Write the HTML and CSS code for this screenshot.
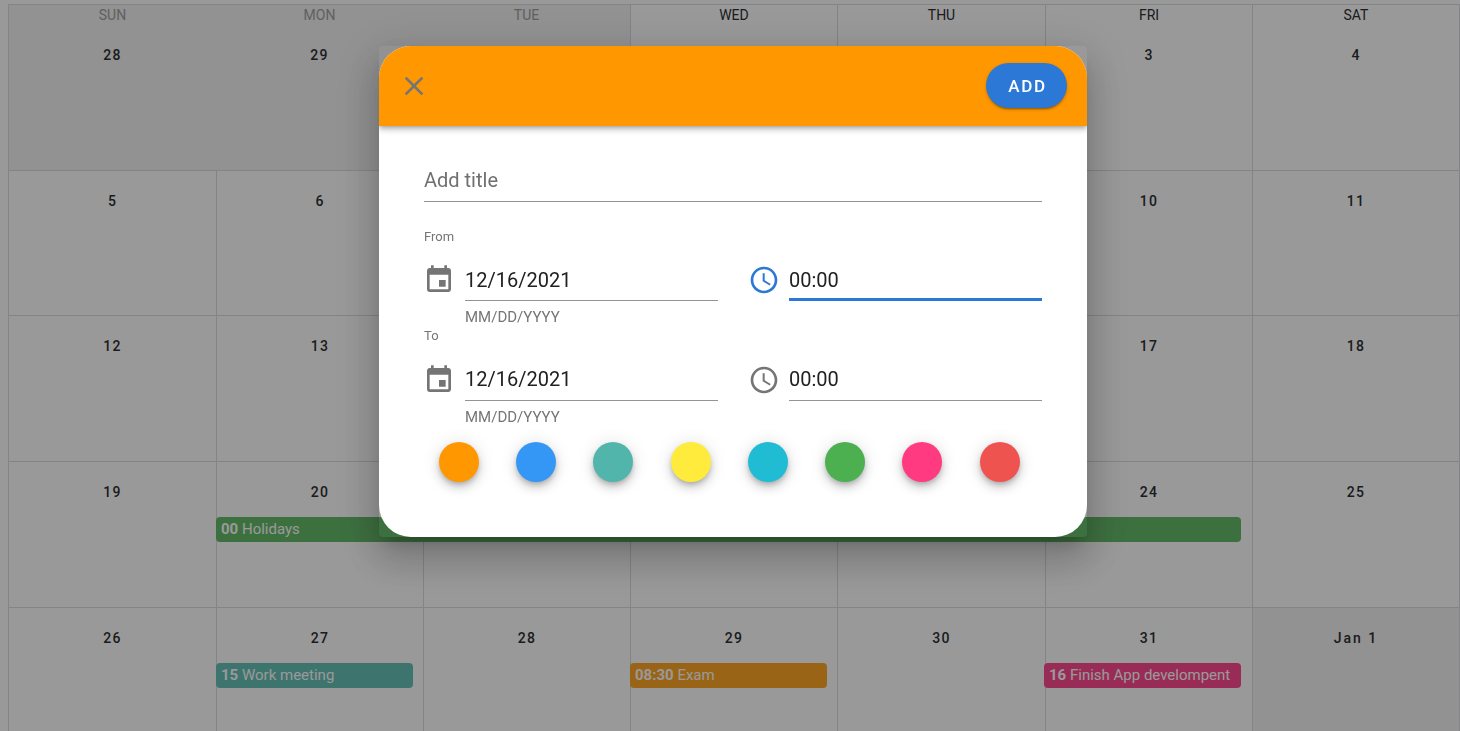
FILE: index.html
```html
<!DOCTYPE html>
<html lang="en">
<head>
    <meta charset="UTF-8">
    <meta name="viewport" content="width=device-width, initial-scale=1.0">
    <title>Calendar</title>
    <link rel="stylesheet" href="styles.css">
</head>
<body>
    <div class="calendar">
        <div class="week first-week">
            <div class="day other-month"><div class="day-name past">SUN</div><div class="date">28</div></div>
            <div class="day other-month no-line"><div class="day-name past">MON</div><div class="date">29</div></div>
            <div class="day other-month no-line"><div class="day-name past">TUE</div><div class="date">30</div></div>
            <div class="day"><div class="day-name">WED</div><div class="date">1</div></div>
            <div class="day"><div class="day-name">THU</div><div class="date">2</div></div>
            <div class="day"><div class="day-name">FRI</div><div class="date">3</div></div>
            <div class="day"><div class="day-name">SAT</div><div class="date">4</div></div>
        </div>
        <div class="week">
            <div class="day"><div class="date">5</div></div>
            <div class="day"><div class="date">6</div></div>
            <div class="day"><div class="date">7</div></div>
            <div class="day"><div class="date">8</div></div>
            <div class="day"><div class="date">9</div></div>
            <div class="day"><div class="date">10</div></div>
            <div class="day"><div class="date">11</div></div>
        </div>
        <div class="week">
            <div class="day"><div class="date">12</div></div>
            <div class="day"><div class="date">13</div></div>
            <div class="day"><div class="date">14</div></div>
            <div class="day"><div class="date">15</div></div>
            <div class="day"><div class="date">16</div></div>
            <div class="day"><div class="date">17</div></div>
            <div class="day"><div class="date">18</div></div>
        </div>
        <div class="week">
            <div class="day"><div class="date">19</div></div>
            <div class="day"><div class="date">20</div></div>
            <div class="day"><div class="date">21</div></div>
            <div class="day"><div class="date">22</div></div>
            <div class="day"><div class="date">23</div></div>
            <div class="day"><div class="date">24</div></div>
            <div class="day"><div class="date">25</div></div>
            <div class="week-events">
                <div class="event green holidays"><b>00</b> Holidays</div>
            </div>
        </div>
        <div class="week">
            <div class="day"><div class="date">26</div></div>
            <div class="day"><div class="date">27</div></div>
            <div class="day"><div class="date">28</div></div>
            <div class="day"><div class="date">29</div></div>
            <div class="day"><div class="date">30</div></div>
            <div class="day"><div class="date">31</div></div>
            <div class="day other-month"><div class="date month-start">Jan 1</div></div>
            <div class="week-events">
                <div class="event teal col-2"><b>15</b> Work meeting</div>
                <div class="event orange col-4"><b>08:30</b> Exam</div>
                <div class="event pink col-6"><b>16</b> Finish App develompent</div>
            </div>
        </div>
    </div>

    <div class="overlay">
        <div class="dialog">
            <div class="dialog-inner">
                <header class="dialog-header">
                    <svg class="icon close-icon" viewBox="0 0 24 24"><path d="M19 6.41L17.59 5 12 10.59 6.41 5 5 6.41 10.59 12 5 17.59 6.41 19 12 13.41 17.59 19 19 17.59 13.41 12z"/></svg>
                    <button class="add-btn" type="button">ADD</button>
                </header>
                <div class="dialog-body">
                    <div class="field title-field">Add title</div>

                    <div class="label from-label">From</div>
                    <div class="date-row from-row">
                        <div class="pair">
                            <svg class="icon" viewBox="0 0 24 24"><path d="M17 12h-5v5h5v-5zM16 1v2H8V1H6v2H5c-1.11 0-1.99.9-1.99 2L3 19c0 1.1.89 2 2 2h14c1.1 0 2-.9 2-2V5c0-1.1-.9-2-2-2h-1V1h-2zm3 18H5V8h14v11z"/></svg>
                            <div class="pair-main">
                                <div class="field">12/16/2021</div>
                                <div class="helper">MM/DD/YYYY</div>
                            </div>
                        </div>
                        <div class="pair time-pair">
                            <svg class="icon icon-active" viewBox="0 0 24 24"><path d="M11.99 2C6.47 2 2 6.48 2 12s4.47 10 9.99 10C17.52 22 22 17.52 22 12S17.52 2 11.99 2zM12 20c-4.42 0-8-3.58-8-8s3.58-8 8-8 8 3.58 8 8-3.58 8-8 8zm.5-13H11v6l5.25 3.15.75-1.23-4.5-2.67z"/></svg>
                            <div class="pair-main">
                                <div class="field focused">00:00</div>
                            </div>
                        </div>
                    </div>

                    <div class="label to-label">To</div>
                    <div class="date-row to-row">
                        <div class="pair">
                            <svg class="icon" viewBox="0 0 24 24"><path d="M17 12h-5v5h5v-5zM16 1v2H8V1H6v2H5c-1.11 0-1.99.9-1.99 2L3 19c0 1.1.89 2 2 2h14c1.1 0 2-.9 2-2V5c0-1.1-.9-2-2-2h-1V1h-2zm3 18H5V8h14v11z"/></svg>
                            <div class="pair-main">
                                <div class="field">12/16/2021</div>
                                <div class="helper">MM/DD/YYYY</div>
                            </div>
                        </div>
                        <div class="pair time-pair">
                            <svg class="icon" viewBox="0 0 24 24"><path d="M11.99 2C6.47 2 2 6.48 2 12s4.47 10 9.99 10C17.52 22 22 17.52 22 12S17.52 2 11.99 2zM12 20c-4.42 0-8-3.58-8-8s3.58-8 8-8 8 3.58 8 8-3.58 8-8 8zm.5-13H11v6l5.25 3.15.75-1.23-4.5-2.67z"/></svg>
                            <div class="pair-main">
                                <div class="field">00:00</div>
                            </div>
                        </div>
                    </div>

                    <div class="colors">
                        <div class="color c-orange"></div>
                        <div class="color c-blue"></div>
                        <div class="color c-teal"></div>
                        <div class="color c-yellow"></div>
                        <div class="color c-cyan"></div>
                        <div class="color c-green"></div>
                        <div class="color c-pink"></div>
                        <div class="color c-red"></div>
                    </div>
                </div>
            </div>
        </div>
    </div>
</body>
</html>
```

FILE: styles.css
```css
* {
    box-sizing: border-box;
}
html, body {
    height: 100%;
}
body {
    margin: 0;
    padding: 4px 0 0 8px;
    font-family: Roboto, "Liberation Sans", sans-serif;
    background-color: #fff;
    overflow: hidden;
}

/* calendar behind the dialog */
.calendar {
    width: 1452px;
    border-right: 1px solid #dadce0;
}
.week {
    position: relative;
    display: grid;
    grid-template-columns: 208px 207px 207px 207px 208px 207px 1fr;
    height: 145.6px;
    border-top: 1px solid #dadce0;
}
.first-week {
    height: 165.8px;
}
.day {
    border-left: 1px solid #dadce0;
    text-align: center;
    color: #3c4043;
}
.no-line {
    border-left: none;
}
.other-month {
    background-color: #f3f3f3;
}
.day-name {
    height: 20px;
    line-height: 20px;
    font-size: 14px;
    color: #2c2f33;
}
.day-name.past {
    color: #a0a0a0;
}
.date {
    margin-top: 20px;
    height: 20px;
    line-height: 20px;
    font-size: 14px;
    font-weight: 500;
    letter-spacing: 1.2px;
    color: #2c2f33;
}
.month-start {
    letter-spacing: 2px;
}
.week-events {
    position: absolute;
    top: 55px;
    left: 0;
    right: 0;
    display: grid;
    grid-template-columns: 208px 207px 207px 207px 208px 207px 1fr;
}
.event {
    height: 25px;
    line-height: 25px;
    padding-left: 5px;
    margin-right: 10px;
    border-radius: 4px;
    font-size: 15px;
    color: #fff;
    white-space: nowrap;
    overflow: hidden;
}
.event b {
    font-weight: 700;
}
.holidays {
    grid-column: 2 / 7;
    margin-right: 11px;
}
.col-2 {
    grid-column: 2;
    grid-row: 1;
}
.col-4 {
    grid-column: 4;
    grid-row: 1;
}
.col-6 {
    grid-column: 6;
    grid-row: 1;
    margin: 0 11px 0 -1px;
}
.green {
    background-color: #66bb6a;
}
.teal {
    background-color: #66c2b8;
}
.orange {
    background-color: #ffa726;
    color: #fff;
}
.pink {
    background-color: #ff4a8f;
}

/* dialog */
.overlay {
    position: fixed;
    top: 0;
    left: 0;
    right: 0;
    bottom: 0;
    padding: 46px 0 0 379px;
    background-color: rgba(0, 0, 0, 0.4);
}
.dialog {
    width: 708px;
    border-radius: 4px;
    box-shadow: 0 11px 15px -7px rgba(0, 0, 0, 0.2), 0 24px 38px 3px rgba(0, 0, 0, 0.14), 0 9px 46px 8px rgba(0, 0, 0, 0.12);
}
.dialog-inner {
    background-color: #fff;
    border-radius: 32px;
    overflow: hidden;
}
.dialog-header {
    position: relative;
    display: flex;
    align-items: center;
    justify-content: space-between;
    height: 80px;
    padding: 0 20px 0 19px;
    background-color: #ff9800;
    box-shadow: 0 2px 4px -1px rgba(0, 0, 0, 0.2), 0 4px 5px 0 rgba(0, 0, 0, 0.14), 0 1px 10px 0 rgba(0, 0, 0, 0.12);
}
.icon {
    display: block;
    flex: none;
    width: 32px;
    height: 32px;
    fill: #757575;
}
.icon-active {
    fill: #2b78d6;
}
.add-btn {
    width: 81px;
    height: 45px;
    margin-bottom: 1px;
    padding: 0 0 0 2px;
    border: none;
    border-radius: 23px;
    background-color: #2b78d6;
    color: #fff;
    font-family: inherit;
    font-size: 17px;
    font-weight: 500;
    letter-spacing: 1.6px;
    cursor: pointer;
    box-shadow: 0 3px 1px -2px rgba(0, 0, 0, 0.2), 0 2px 2px 0 rgba(0, 0, 0, 0.14), 0 1px 5px 0 rgba(0, 0, 0, 0.12);
}
.dialog-body {
    padding: 36px 45px 55px;
}
.field {
    height: 40px;
    padding-bottom: 2px;
    display: flex;
    align-items: center;
    border-bottom: 1px solid #949494;
    font-size: 20px;
    color: #212121;
}
.title-field {
    padding-bottom: 3px;
    color: #707070;
}
.field.focused {
    padding-bottom: 0;
    border-bottom: 3px solid #2b78d6;
}
.to-row .field {
    padding-bottom: 4px;
}
.label {
    height: 14px;
    line-height: 14px;
    font-size: 13px;
    color: #757575;
}
.from-label {
    margin-top: 28px;
}
.to-label {
    margin-top: 4px;
}
.date-row {
    display: grid;
    grid-template-columns: 294px 294px;
    column-gap: 30px;
}
.from-row {
    margin-top: 17px;
}
.to-row {
    margin-top: 18px;
}
.pair {
    display: flex;
}
.pair .icon {
    margin: 3px 10px 0 -1px;
}
.time-pair .icon {
    margin: 3px 9px 0 0;
}
.pair-main {
    flex: 1;
}
.helper {
    height: 16px;
    margin-top: 8px;
    line-height: 16px;
    font-size: 15px;
    color: #757575;
}
.colors {
    display: flex;
    justify-content: space-between;
    margin-top: 17px;
    padding: 0 22.4px 0 15px;
}
.color {
    width: 40px;
    height: 40px;
    border-radius: 50%;
    box-shadow: 0 3px 5px -1px rgba(0, 0, 0, 0.2), 0 6px 10px 0 rgba(0, 0, 0, 0.14), 0 1px 18px 0 rgba(0, 0, 0, 0.12);
}
.c-orange {
    background-color: #ff9800;
}
.c-blue {
    background-color: #3497f5;
}
.c-teal {
    background-color: #52b5ac;
}
.c-yellow {
    background-color: #ffeb3b;
}
.c-cyan {
    background-color: #1fbcd4;
}
.c-green {
    background-color: #4caf50;
}
.c-pink {
    background-color: #ff3a80;
}
.c-red {
    background-color: #ef5350;
}
```
